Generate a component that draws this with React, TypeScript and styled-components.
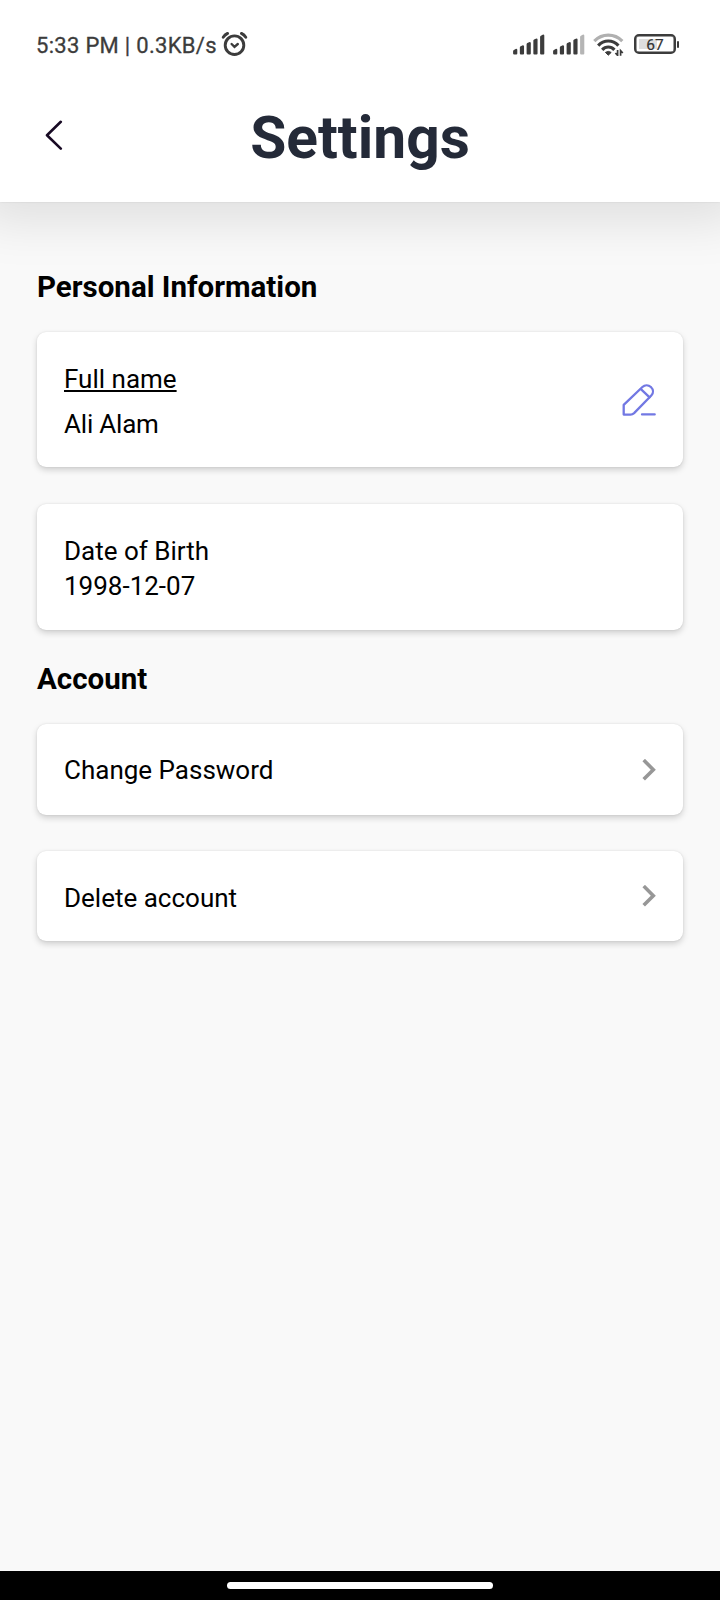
import React from "react";
import styled, { createGlobalStyle } from "styled-components";

const GlobalStyle = createGlobalStyle`
  * { box-sizing: border-box; }
  body { margin: 0; background: #f9f9f9; font-family: Roboto, sans-serif; color: #000; }
  svg { display: block; flex: none; }
`;

const Screen = styled.div`
  display: flex;
  flex-direction: column;
  width: 720px;
  height: 1600px;
  overflow: hidden;
  background: #f9f9f9;
`;

const Top = styled.header`
  flex: none;
  height: 202px;
  background: #fff;
  box-shadow: 0 0 2px rgba(0, 0, 0, 0.1), 0 0 46px 20px rgba(0, 0, 0, 0.1);
`;

const StatusBar = styled.div`
  display: flex;
  align-items: center;
  height: 88px;
  padding: 0 41px 0 36px;
`;

const StatusText = styled.span`
  width: 185px;
  padding-top: 3px;
  font-size: 22px;
  line-height: 26px;
  letter-spacing: 0.3px;
  white-space: nowrap;
  -webkit-text-stroke: 0.3px #3c3c3c;
  color: #3c3c3c;
`;

const StatusIcons = styled.div`
  display: flex;
  align-items: center;
  margin-left: auto;
`;

const BatteryRow = styled.div`
  display: flex;
  align-items: center;
  margin-left: 10px;
`;

const BatteryBody = styled.div`
  display: flex;
  align-items: center;
  justify-content: center;
  width: 42px;
  height: 20px;
  border: 2px solid #3c3c3c;
  border-radius: 5px;
  box-shadow: inset 0 0 0 0.5px #3c3c3c;
  background: linear-gradient(#dedede, #dedede) 3px 3px / 18px 10px no-repeat;
  font-size: 15.5px;
  line-height: 16px;
  padding-top: 1px;
  font-weight: 400;
  -webkit-text-stroke: 0.2px #333;
  color: #333;
`;

const BatteryTip = styled.div`
  width: 2px;
  height: 7px;
  margin-left: 1px;
  border-radius: 1px;
  background: #3c3c3c;
`;

const TitleBar = styled.div`
  display: grid;
  grid-template-columns: 63px 1fr 63px;
  align-items: center;
  height: 100px;
`;

const BackButton = styled.button`
  display: flex;
  justify-content: flex-end;
  padding: 0;
  margin-top: -6px;
  border: 0;
  background: none;
`;

const Title = styled.h1`
  margin: 0;
  font-size: 58.7px;
  line-height: 68px;
  font-weight: 700;
  text-align: center;
  color: #242a38;
`;

const Content = styled.main`
  flex: 1;
  padding: 0 37px;
`;

const SectionTitle = styled.h2<{ $top: number; $bottom: number }>`
  margin: ${(p) => p.$top}px 0 ${(p) => p.$bottom}px;
  font-size: 29.5px;
  line-height: 34px;
  font-weight: 700;
`;

const Card = styled.section<{ $height: number }>`
  display: flex;
  align-items: center;
  justify-content: space-between;
  height: ${(p) => p.$height}px;
  padding: 0 27px;
  border-radius: 9px;
  background: #fff;
  box-shadow: 0 0 2px rgba(0, 0, 0, 0.1), 0 3px 6px rgba(0, 0, 0, 0.17);
`;

const CardStack = styled.div<{ $gap: number }>`
  display: flex;
  flex-direction: column;
  gap: ${(p) => p.$gap}px;
`;

const Lines = styled.div<{ $gap?: number; $drop?: number }>`
  display: flex;
  flex-direction: column;
  gap: ${(p) => p.$gap ?? 0}px;
  padding-top: ${(p) => p.$drop ?? 3}px;
`;

const Line = styled.span<{ $underline?: boolean; $tight?: boolean }>`
  font-size: 26px;
  line-height: 35px;
  letter-spacing: ${(p) => (p.$tight ? "-0.2px" : "0")};
  text-decoration: ${(p) => (p.$underline ? "underline" : "none")};
  text-decoration-thickness: 1.5px;
  text-underline-offset: 2px;
`;

const NavBar = styled.footer`
  display: flex;
  flex: none;
  justify-content: center;
  height: 29px;
  padding-top: 11px;
  background: #000;
`;

const Handle = styled.div`
  width: 266px;
  height: 7px;
  border-radius: 4px;
  background: #fff;
`;

const INK = "#3c3c3c";

const AlarmIcon = () => (
  <svg width="28" height="26" viewBox="0 0 28 26" fill="none" stroke={INK} strokeWidth="2.9" strokeLinecap="round">
    <circle cx="13.5" cy="14.2" r="9.3" />
    <path d="M2.2 6.2Q3.8 3.8 6.6 2.4M24.8 6.2Q23.2 3.8 20.4 2.4" />
    <path d="M10.6 13L13.5 15.8L16.8 13" strokeWidth="2.4" />
  </svg>
);

const BAR_TOPS = [14.8, 11.2, 8, 4.4, 0.6];

const Signal = ({ weak = false }: { weak?: boolean }) => (
  <svg width="40" height="21" viewBox="0 0 40 21">
    {BAR_TOPS.map((top, i) => {
      const x = 0.1 + i * 6.75;
      return (
        <path
          key={i}
          d={`M${x} ${top + 2.4}Q${x} ${top + 1.5} ${x + 0.8} ${top + 1.1}L${x + 3} ${top}Q${x + 4.2} ${top} ${x + 4.2} ${top + 1}V19.6Q${x + 4.2} 20.6 ${x + 3.2} 20.6H${x + 1}Q${x} 20.6 ${x} 19.6Z`}
          fill={weak && i === 4 ? "#b5b5b5" : INK}
        />
      );
    })}
  </svg>
);

const WifiIcon = () => (
  <svg width="31" height="23" viewBox="0 0 31 23" fill="none" strokeWidth="3.2">
    <path d="M1.3 8.2Q7.2 2.2 15.3 2.2T29.3 8.2" stroke="#b0b0b0" />
    <path d="M5.2 12.6Q9.5 8 15.3 8T25.4 12.6" stroke={INK} />
    <path d="M9.2 16.8Q11.8 14 15.3 14T21.4 16.8" stroke={INK} />
    <path d="M12.4 19.4Q15.3 17.4 18.2 19.4L15.3 22.2Z" fill={INK} stroke={INK} strokeWidth="1" />
    <path d="M24.6 17V22.4L22.4 20M27.6 22.8V17.6L29.8 20" stroke={INK} strokeWidth="1.7" />
  </svg>
);

const BackIcon = () => (
  <svg width="19" height="31" viewBox="0 0 19 31" fill="none" stroke="#180a24" strokeWidth="2.6" strokeLinecap="round" strokeLinejoin="round">
    <path d="M16.8 1.8L3 15.2L16.8 28.6" />
  </svg>
);

const PencilIcon = () => (
  <svg width="34" height="34" viewBox="0 0 34 34" fill="none" stroke="#7278e3" strokeWidth="2.3" strokeLinecap="round" strokeLinejoin="round">
    <path d="M1.7 31.6V21.8L20.4 4C22.8 1.7 26.5 1.8 28.9 4C31.5 6.5 31.6 10.1 29.3 12.5L12.1 30.1Q10.5 31.6 8.5 31.6Z" />
    <path d="M18.9 6.1L27.6 14.3M20 31.4H32.7" />
  </svg>
);

const ChevronIcon = () => (
  <svg width="14" height="22" viewBox="0 0 14 22" fill="none" stroke="#979797" strokeWidth="3.6">
    <path d="M1.7 1.1L11.3 10.7L1.7 20.3" />
  </svg>
);

export default function App() {
  return (
    <>
      <GlobalStyle />
      <Screen>
        <Top>
          <StatusBar>
            <StatusText>5:33 PM | 0.3KB/s</StatusText>
            <AlarmIcon />
            <StatusIcons>
              <Signal />
              <Signal weak />
              <WifiIcon />
              <BatteryRow>
                <BatteryBody>67</BatteryBody>
                <BatteryTip />
              </BatteryRow>
            </StatusIcons>
          </StatusBar>
          <TitleBar>
            <BackButton aria-label="Back">
              <BackIcon />
            </BackButton>
            <Title>Settings</Title>
          </TitleBar>
        </Top>
        <Content>
          <SectionTitle $top={68} $bottom={28}>Personal Information</SectionTitle>
          <CardStack $gap={37}>
            <Card $height={135}>
              <Lines $gap={10} $drop={5}>
                <Line $underline>Full name</Line>
                <Line $tight>Ali Alam</Line>
              </Lines>
              <PencilIcon />
            </Card>
            <Card $height={126}>
              <Lines>
                <Line>Date of Birth</Line>
                <Line>1998-12-07</Line>
              </Lines>
            </Card>
          </CardStack>
          <SectionTitle $top={32} $bottom={28}>Account</SectionTitle>
          <CardStack $gap={36}>
            <Card $height={91}>
              <Lines $drop={2}>
                <Line>Change Password</Line>
              </Lines>
              <ChevronIcon />
            </Card>
            <Card $height={90}>
              <Lines $drop={4}>
                <Line>Delete account</Line>
              </Lines>
              <ChevronIcon />
            </Card>
          </CardStack>
        </Content>
        <NavBar>
          <Handle />
        </NavBar>
      </Screen>
    </>
  );
}
